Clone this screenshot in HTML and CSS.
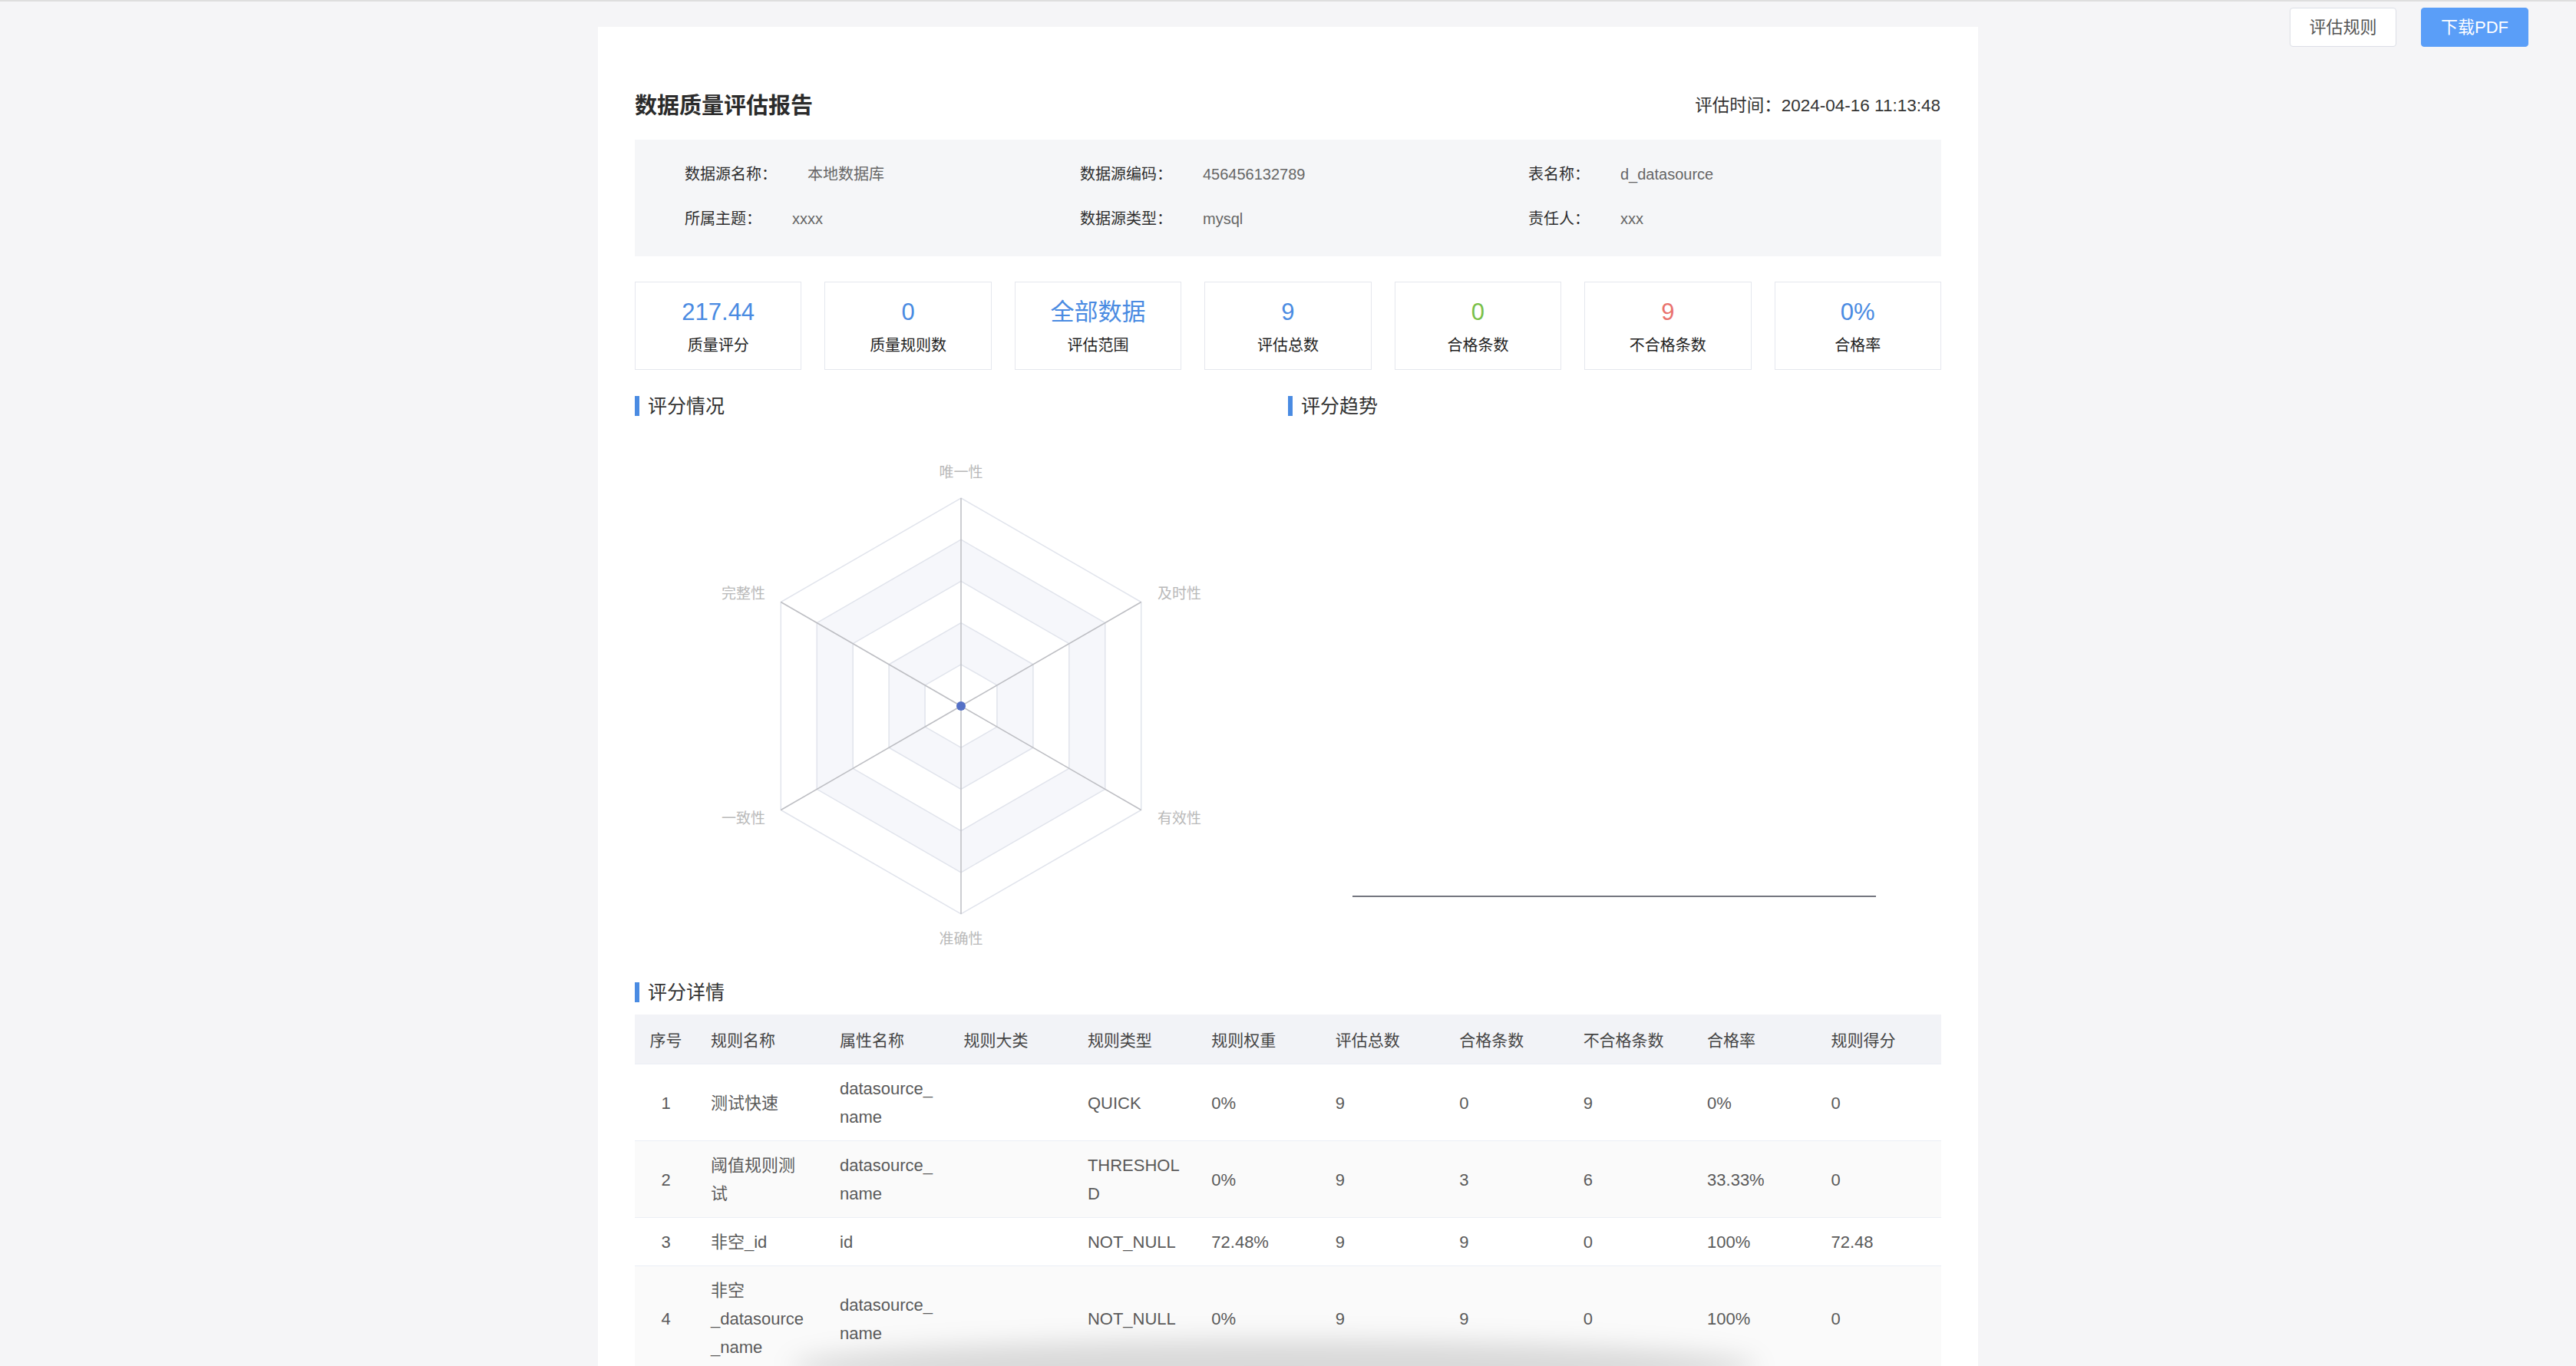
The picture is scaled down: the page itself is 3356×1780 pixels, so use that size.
FILE: index.html
```html
<!DOCTYPE html>
<html lang="zh-CN">
<head>
<meta charset="utf-8">
<title>数据质量评估报告</title>
<link rel="stylesheet" href="styles.css">
</head>
<body>
<div class="page">
  <main class="report">
    <div class="report-head">
      <h1 class="report-title">数据质量评估报告</h1>
      <div class="report-time">评估时间：2024-04-16 11:13:48</div>
    </div>

    <div class="info">
      <div class="info-item"><span class="info-label">数据源名称：</span><span class="info-value">本地数据库</span></div>
      <div class="info-item"><span class="info-label">数据源编码：</span><span class="info-value">456456132789</span></div>
      <div class="info-item"><span class="info-label">表名称：</span><span class="info-value">d_datasource</span></div>
      <div class="info-item"><span class="info-label">所属主题：</span><span class="info-value">xxxx</span></div>
      <div class="info-item"><span class="info-label">数据源类型：</span><span class="info-value">mysql</span></div>
      <div class="info-item"><span class="info-label">责任人：</span><span class="info-value">xxx</span></div>
    </div>

    <div class="stats">
      <div class="stat"><div class="stat-num blue">217.44</div><div class="stat-label">质量评分</div></div>
      <div class="stat"><div class="stat-num blue">0</div><div class="stat-label">质量规则数</div></div>
      <div class="stat"><div class="stat-num blue">全部数据</div><div class="stat-label">评估范围</div></div>
      <div class="stat"><div class="stat-num blue">9</div><div class="stat-label">评估总数</div></div>
      <div class="stat"><div class="stat-num green">0</div><div class="stat-label">合格条数</div></div>
      <div class="stat"><div class="stat-num red">9</div><div class="stat-label">不合格条数</div></div>
      <div class="stat"><div class="stat-num blue">0%</div><div class="stat-label">合格率</div></div>
    </div>

    <div class="charts">
      <section class="chart-col">
        <h2 class="section-title">评分情况</h2>
        <svg class="chart" width="851" height="718" viewBox="0 0 851 718">
          <polygon class="ring" fill="#ffffff" points="425,107 659.7,242.5 659.7,513.5 425,649 190.3,513.5 190.3,242.5"/>
          <polygon class="ring" fill="#f6f7fb" points="425,161.2 612.75,269.6 612.75,486.4 425,594.8 237.25,486.4 237.25,269.6"/>
          <polygon class="ring" fill="#ffffff" points="425,215.4 565.8,296.7 565.8,459.3 425,540.6 284.2,459.3 284.2,296.7"/>
          <polygon class="ring" fill="#f6f7fb" points="425,269.6 518.9,323.8 518.9,432.2 425,486.4 331.1,432.2 331.1,323.8"/>
          <polygon class="ring" fill="#ffffff" points="425,323.8 471.9,350.9 471.9,405.1 425,432.2 378.1,405.1 378.1,350.9"/>
          <line class="axis" x1="425" y1="378" x2="425" y2="107"/>
          <line class="axis" x1="425" y1="378" x2="659.7" y2="242.5"/>
          <line class="axis" x1="425" y1="378" x2="659.7" y2="513.5"/>
          <line class="axis" x1="425" y1="378" x2="425" y2="649"/>
          <line class="axis" x1="425" y1="378" x2="190.3" y2="513.5"/>
          <line class="axis" x1="425" y1="378" x2="190.3" y2="242.5"/>
          <circle cx="425" cy="378" r="6" fill="#5470c6"/>
          <text class="axis-name" x="425" y="73" text-anchor="middle">唯一性</text>
          <text class="axis-name" x="681" y="231" text-anchor="start">及时性</text>
          <text class="axis-name" x="681" y="524" text-anchor="start">有效性</text>
          <text class="axis-name" x="425" y="681" text-anchor="middle">准确性</text>
          <text class="axis-name" x="170" y="524" text-anchor="end">一致性</text>
          <text class="axis-name" x="170" y="231" text-anchor="end">完整性</text>
        </svg>
      </section>
      <section class="chart-col">
        <h2 class="section-title">评分趋势</h2>
        <svg class="chart" width="851" height="718" viewBox="0 0 851 718">
          <line x1="84" y1="626" x2="766" y2="626" stroke="#74767f" stroke-width="2"/>
        </svg>
      </section>
    </div>

    <h2 class="section-title detail-title">评分详情</h2>
    <table class="detail">
      <colgroup>
        <col class="c-idx"><col class="c-name"><col><col><col><col><col><col><col><col><col>
      </colgroup>
      <thead>
        <tr>
          <th class="idx">序号</th><th>规则名称</th><th>属性名称</th><th>规则大类</th><th>规则类型</th><th>规则权重</th><th>评估总数</th><th>合格条数</th><th>不合格条数</th><th>合格率</th><th>规则得分</th>
        </tr>
      </thead>
      <tbody>
        <tr>
          <td class="idx">1</td><td class="name">测试快速</td><td>datasource_name</td><td></td><td>QUICK</td><td>0%</td><td>9</td><td>0</td><td>9</td><td>0%</td><td>0</td>
        </tr>
        <tr>
          <td class="idx">2</td><td class="name">阈值规则测试</td><td>datasource_name</td><td></td><td>THRESHOLD</td><td>0%</td><td>9</td><td>3</td><td>6</td><td>33.33%</td><td>0</td>
        </tr>
        <tr>
          <td class="idx">3</td><td class="name">非空_id</td><td>id</td><td></td><td>NOT_NULL</td><td>72.48%</td><td>9</td><td>9</td><td>0</td><td>100%</td><td>72.48</td>
        </tr>
        <tr>
          <td class="idx">4</td><td class="name">非空_datasource_name</td><td>datasource_name</td><td></td><td>NOT_NULL</td><td>0%</td><td>9</td><td>9</td><td>0</td><td>100%</td><td>0</td>
        </tr>
      </tbody>
    </table>
  </main>

  <div class="toolbar">
    <button class="btn">评估规则</button>
    <button class="btn primary">下载PDF</button>
  </div>
</div>
<div class="bottom-shadow"></div>
</body>
</html>
```

FILE: styles.css
```css
html {
  overflow: hidden;
}

body {
  margin: 0;
  height: 1778px;
  overflow: hidden;
  background: #f5f5f7;
  border-top: 2px solid #dedede;
  font-family: "Liberation Sans", "Noto Sans CJK SC", sans-serif;
  color: #333;
}

.page {
  display: grid;
  grid-template-columns: 1fr 1798px 1fr;
  align-items: start;
}

.report {
  grid-column: 2;
  grid-row: 1;
  margin-top: 33px;
  background: #fff;
  padding: 72px 48px 60px;
  min-height: 1800px;
  box-sizing: border-box;
}

.toolbar {
  grid-column: 3;
  grid-row: 1;
  justify-self: end;
  display: flex;
  gap: 32px;
  padding: 8px 62px 0 0;
}

.btn {
  width: 139px;
  height: 51px;
  font-family: inherit;
  font-size: 22px;
  line-height: 49px;
  color: #555;
  background: #fff;
  border: 1px solid #dcdfe6;
  border-radius: 4px;
  padding: 0 0 3px;
}

.btn.primary {
  width: 140px;
  background: #5a9ef8;
  border-color: #5a9ef8;
  color: #fff;
}

/* header */
.report-head {
  height: 56px;
  display: flex;
  align-items: center;
  justify-content: space-between;
}

.report-title {
  margin: 0;
  font-size: 29px;
  font-weight: bold;
  color: #2b2b2b;
}

.report-time {
  font-size: 22.5px;
  color: #333;
  margin-right: 1px;
}

/* info box */
.info {
  margin-top: 19px;
  background: #f5f6f8;
  padding: 16px 40px 20px 65px;
  display: grid;
  grid-template-columns: 515px 584px 1fr;
}

.info-item {
  height: 58px;
  line-height: 58px;
  font-size: 20px;
  white-space: nowrap;
}

.info-label {
  color: #2e2e2e;
}

.info-value {
  color: #666;
  margin-left: 40px;
}

/* stats */
.stats {
  margin-top: 33px;
  display: flex;
  gap: 30px;
}

.stat {
  flex: 1;
  height: 115px;
  box-sizing: border-box;
  border: 1px solid #e5e7ee;
  padding-top: 19px;
  text-align: center;
}

.stat-num {
  font-size: 31px;
  line-height: 40px;
}

.stat-label {
  margin-top: 9px;
  font-size: 20px;
  line-height: 28px;
  color: #1f1f1f;
}

.blue { color: #4a8be2; }
.green { color: #79c048; }
.red { color: #e9726d; }

/* charts */
.charts {
  margin-top: 34px;
  display: flex;
}

.chart-col {
  flex: 1;
}

.section-title {
  margin: 0;
  height: 26px;
  line-height: 26px;
  border-left: 6px solid #4a8be2;
  padding-left: 11px;
  font-size: 25px;
  font-weight: normal;
  color: #333;
}

.chart {
  display: block;
}

.ring {
  stroke: #e1e4ec;
  stroke-width: 1.5;
}

.axis {
  stroke: #bdbec3;
  stroke-width: 1.5;
}

.axis-name {
  font-family: "Liberation Sans", "Noto Sans CJK SC", sans-serif;
  font-size: 19px;
  fill: #b9b9b9;
  dominant-baseline: central;
}

/* detail table */
.detail-title {
  margin-top: 20px;
}

.detail {
  margin-top: 16px;
  width: 100%;
  border-collapse: collapse;
  table-layout: fixed;
}

.c-idx { width: 81px; }
.c-name { width: 168px; }

.detail th {
  height: 64px;
  padding: 0 18px;
  background: #f2f3f7;
  font-size: 21px;
  font-weight: normal;
  color: #454545;
  text-align: left;
  border-bottom: 1px solid #ebeef5;
}

.detail td {
  padding: 13px 18px 12px;
  line-height: 37px;
  font-size: 22px;
  color: #5a5a5a;
  border-bottom: 1px solid #ebeef5;
  overflow-wrap: anywhere;
  vertical-align: middle;
}

.detail td.name {
  padding-right: 22px;
}

.detail .idx {
  text-align: center;
  padding-left: 0;
  padding-right: 0;
}

.detail tbody tr:nth-child(even) td {
  background: #fafafa;
}

/* soft shadow at bottom edge */
.bottom-shadow {
  position: fixed;
  left: 1030px;
  width: 1260px;
  bottom: -36px;
  height: 70px;
  border-radius: 50%;
  background: rgba(0, 0, 0, 0.13);
  filter: blur(16px);
  pointer-events: none;
}
```
